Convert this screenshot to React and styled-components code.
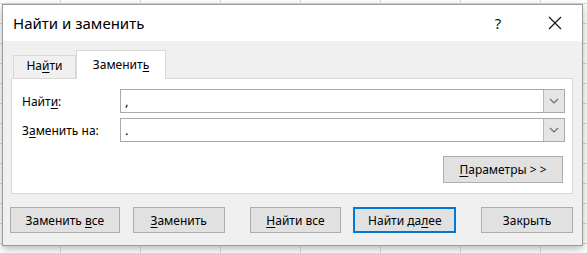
import React, { useState } from 'react';
import styled, { createGlobalStyle } from 'styled-components';

const GlobalStyle = createGlobalStyle`
  body {
    margin: 0;
    background: #fff;
    font-family: "Segoe UI", "Noto Sans", "DejaVu Sans", sans-serif;
  }
`;

const Sheet = styled.div`
  width: 587px;
  height: 253px;
  overflow: hidden;
  box-sizing: border-box;
  padding: 4px 0 0 2px;
  background-color: #fff;
  background-image:
    linear-gradient(to right, #dadada 1px, transparent 1px),
    linear-gradient(to bottom, #dadada 1px, transparent 1px);
  background-size: 80px 20px;
  background-position: 60px 3px;
`;

const Dialog = styled.div`
  width: 581px;
  height: 242px;
  box-sizing: border-box;
  border: 1px solid #9b9b9b;
  background: #f0f0f0;
  box-shadow: 0 3px 8px rgba(0, 0, 0, 0.28);
  display: flex;
  flex-direction: column;
`;

const TitleBar = styled.div`
  height: 36px;
  background: #fff;
  display: flex;
  align-items: center;
  padding-left: 10px;
`;

const Title = styled.div`
  flex: 1;
  font-size: 15px;
  color: #000;
  padding-bottom: 1px;
`;

const TitleButton = styled.div`
  width: ${p => p.$w}px;
  height: 36px;
  display: flex;
  align-items: center;
  justify-content: center;
  font-size: 15px;
  color: #111;
`;

const Body = styled.div`
  flex: 1;
  padding: 9px 9px 0 8px;
  display: flex;
  flex-direction: column;
`;

const TabBar = styled.div`
  display: flex;
  align-items: flex-end;
  padding-left: 2px;
  height: 28px;
`;

const Tab = styled.div`
  width: ${p => p.$w}px;
  height: ${p => (p.$active ? 29 : 23)}px;
  margin-bottom: ${p => (p.$active ? -1 : 0)}px;
  box-sizing: border-box;
  border: 1px solid #d9d9d9;
  border-bottom: none;
  background: ${p => (p.$active ? '#fff' : '#f0f0f0')};
  z-index: ${p => (p.$active ? 1 : 0)};
  display: flex;
  align-items: flex-end;
  justify-content: center;
  padding-bottom: ${p => (p.$active ? 6 : 4)}px;
  font-size: 12px;
  color: #000;
`;

const Panel = styled.div`
  height: 116px;
  box-sizing: border-box;
  border: 1px solid #d9d9d9;
  background: #fff;
  padding: 10px 7px 0 10px;
  display: flex;
  flex-direction: column;
`;

const FieldGrid = styled.div`
  display: grid;
  grid-template-columns: 98px 445px;
  grid-auto-rows: 24px;
  row-gap: 5px;
  align-items: center;
`;

const Label = styled.label`
  font-size: 12px;
  color: #000;
`;

const Combo = styled.div`
  height: 24px;
  box-sizing: border-box;
  border: 1px solid #a9a9a9;
  display: flex;
  background: #fff;
`;

const ComboText = styled.div`
  flex: 1;
  padding-left: 4px;
  font-size: 13px;
  line-height: 22px;
  color: #000;
`;

const ComboArrow = styled.div`
  width: 21px;
  box-sizing: border-box;
  border-left: 1px solid #b9b9b9;
  background: #e5e5e5;
  display: flex;
  align-items: center;
  justify-content: center;
`;

const OptionsRow = styled.div`
  display: flex;
  justify-content: flex-end;
  margin-top: 14px;
  padding-right: 2px;
`;

const Button = styled.button`
  width: ${p => p.$w}px;
  height: ${p => p.$h || 26}px;
  margin-left: ${p => p.$gap || 0}px;
  box-sizing: border-box;
  background: #e1e1e1;
  border: ${p => (p.$default ? '2px solid #0078d7' : '1px solid #adadad')};
  padding: 0;
  font-family: inherit;
  font-size: 12px;
  color: #000;
  cursor: default;
  display: flex;
  align-items: center;
  justify-content: center;
  white-space: nowrap;
`;

const ButtonRow = styled.div`
  display: flex;
  margin: 13px 0 0 -1px;
`;

const Key = styled.u`
  text-decoration: underline;
  text-underline-offset: 2px;
`;

const Chevron = () => (
  <svg width="10" height="6" viewBox="0 0 10 6">
    <path d="M1 1 L5 5 L9 1" fill="none" stroke="#6a6a6a" strokeWidth="1.1" />
  </svg>
);

const CloseIcon = () => (
  <svg width="14" height="14" viewBox="0 0 14 14">
    <path d="M1 1 L13 13 M13 1 L1 13" stroke="#111" strokeWidth="1.1" />
  </svg>
);

const buttons = [
  { w: 110, gap: 0, label: <>Заменить <Key>в</Key>се</> },
  { w: 92, gap: 13, label: <><Key>З</Key>аменить</> },
  { w: 92, gap: 25, label: <><Key>Н</Key>айти все</> },
  { w: 103, gap: 12, label: <>Найти да<Key>л</Key>ее</>, primary: true },
  { w: 92, gap: 25, label: <>Закрыть</> },
];

export default function App() {
  const [tab, setTab] = useState('replace');

  return (
    <Sheet>
      <GlobalStyle />
      <Dialog>
        <TitleBar>
          <Title>Найти и заменить</Title>
          <TitleButton $w={60}>?</TitleButton>
          <TitleButton $w={54}><CloseIcon /></TitleButton>
        </TitleBar>
        <Body>
          <TabBar>
            <Tab $w={63} $active={tab === 'find'} onClick={() => setTab('find')}>
              <span>На<Key>й</Key>ти</span>
            </Tab>
            <Tab $w={90} $active={tab === 'replace'} onClick={() => setTab('replace')}>
              <span>Заменит<Key>ь</Key></span>
            </Tab>
          </TabBar>
          <Panel>
            <FieldGrid>
              <Label>Найт<Key>и</Key>:</Label>
              <Combo>
                <ComboText>,</ComboText>
                <ComboArrow><Chevron /></ComboArrow>
              </Combo>
              <Label>З<Key>а</Key>менить на:</Label>
              <Combo>
                <ComboText>.</ComboText>
                <ComboArrow><Chevron /></ComboArrow>
              </Combo>
            </FieldGrid>
            <OptionsRow>
              <Button $w={120} $h={27}><Key>П</Key>араметры &gt; &gt;</Button>
            </OptionsRow>
          </Panel>
          <ButtonRow>
            {buttons.map((b, i) => (
              <Button key={i} $w={b.w} $gap={b.gap} $default={b.primary}>
                <span>{b.label}</span>
              </Button>
            ))}
          </ButtonRow>
        </Body>
      </Dialog>
    </Sheet>
  );
}
